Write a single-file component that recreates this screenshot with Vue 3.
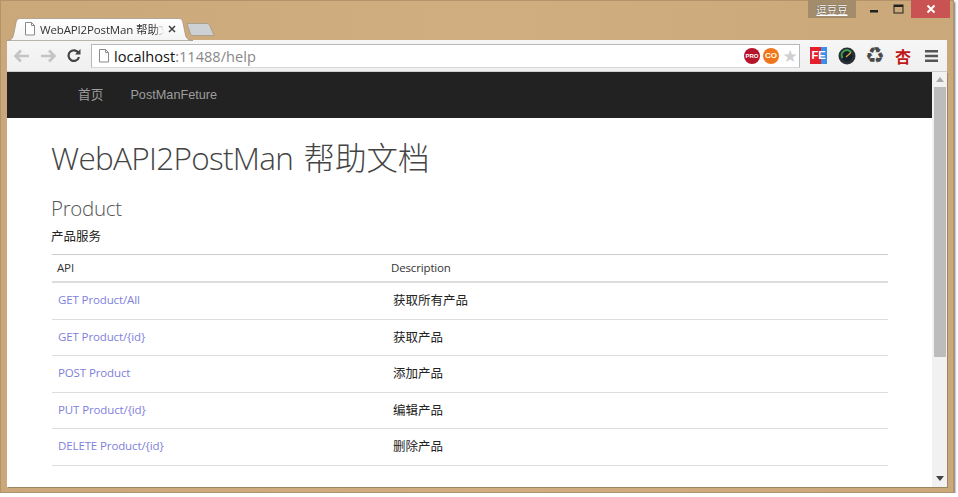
<script setup>
const rows = [
  { api: 'GET Product/All', desc: '获取所有产品' },
  { api: 'GET Product/{id}', desc: '获取产品' },
  { api: 'POST Product', desc: '添加产品' },
  { api: 'PUT Product/{id}', desc: '编辑产品' },
  { api: 'DELETE Product/{id}', desc: '删除产品' },
]
</script>

<template>
  <div class="window">
    <header class="titlebar">
      <div class="tab">
        <svg class="tab-shape" width="186" height="23" viewBox="0 0 186 23">
          <path d="M0 22.5 C5 22 6 20 7 15 L9 5 C10 1 11 .5 15 .5 L170 .5 C174 .5 175 1 176 5 L178 15 C179 20 180 22 186 22.5 Z" fill="url(#tabfill)" stroke="#8f8878" stroke-width=".6" />
          <defs>
            <linearGradient id="tabfill" x1="0" y1="0" x2="0" y2="1">
              <stop offset="0" stop-color="#ffffff" />
              <stop offset="1" stop-color="#f4f4f4" />
            </linearGradient>
          </defs>
        </svg>
        <svg class="page-icon" width="12" height="14" viewBox="0 0 12 14">
          <path d="M1.5 .5 H7.5 L10.5 3.5 V13 H1.5 Z M7.5 .5 V3.5 H10.5" fill="#fff" stroke="#8a8a8a" />
        </svg>
        <span class="tab-title">WebAPI2PostMan 帮助文</span>
        <svg class="tab-close" width="8" height="8" viewBox="0 0 8 8">
          <path d="M1 1 L7 7 M7 1 L1 7" stroke="#444" stroke-width="1.6" />
        </svg>
      </div>
      <svg class="newtab" width="30" height="13" viewBox="0 0 30 13">
        <path d="M1 .5 H20 C22 .5 23 1 24 3 L28 12.5 H7 C5.500 12.500 5 12 4.500 11 Z" fill="#cdd1d4" stroke="#9a9384" stroke-width=".7" />
      </svg>
      <div class="user">逗豆豆</div>
      <div class="controls">
        <svg width="10" height="10" viewBox="0 0 10 10"><rect x="1" y="6" width="8" height="2.500" fill="#222" /></svg>
        <svg class="max" width="11" height="10" viewBox="0 0 11 10"><rect x="1" y="1" width="9" height="8" fill="none" stroke="#222" stroke-width="1" /><rect x="1" y="1" width="9" height="2" fill="#222" /></svg>
        <div class="close">
          <svg width="10" height="10" viewBox="0 0 10 10"><path d="M1.500 1.500 L8.500 8.500 M8.500 1.500 L1.500 8.500" stroke="#fff" stroke-width="2" /></svg>
        </div>
      </div>
    </header>

    <div class="toolbar">
      <svg class="nav" width="18" height="14" viewBox="0 0 18 14"><path d="M16 7 H3 M8 1.500 L2.500 7 L8 12.500" fill="none" stroke="#c4c4c4" stroke-width="2.600" /></svg>
      <svg class="nav fwd" width="18" height="14" viewBox="0 0 18 14"><path d="M2 7 H15 M10 1.500 L15.500 7 L10 12.500" fill="none" stroke="#c4c4c4" stroke-width="2.600" /></svg>
      <svg class="reload" width="14" height="14" viewBox="0 0 14 14"><path d="M11.500 4 A5.300 5.300 0 1 0 12 8" fill="none" stroke="#444" stroke-width="2.200" /><path d="M8 5.500 H13.500 V0 Z" fill="#444" /></svg>
      <div class="omnibox">
        <svg width="12" height="14" viewBox="0 0 12 14">
          <path d="M1.500 .5 H7.500 L10.500 3.500 V13 H1.500 Z M7.500 .5 V3.500 H10.500" fill="#fff" stroke="#8a8a8a" />
        </svg>
        <span class="url"><b>localhost</b>:11488/help</span>
        <span class="badge pro">PRO</span>
        <span class="badge co">CO</span>
        <span class="star">★</span>
      </div>
      <div class="exts">
        <span class="fe"><i>F</i><i>E</i></span>
        <svg width="20" height="20" viewBox="0 0 20 20">
          <circle cx="10" cy="10" r="8.500" fill="#2b3036" />
          <circle cx="10" cy="10" r="5.500" fill="#13202c" />
          <path d="M5.500 12 A5 5 0 0 1 14 6.500" fill="none" stroke="#3fa34d" stroke-width="2" />
          <path d="M14 6.500 L9 11" stroke="#e0a030" stroke-width="1.400" />
        </svg>
        <span class="recycle">♻</span>
        <span class="xing">杏</span>
        <svg width="13" height="12" viewBox="0 0 13 12"><path d="M0 0 H13 V2.500 H0 Z M0 4.700 H13 V7.200 H0 Z M0 9.400 H13 V11.900 H0 Z" fill="#555" /></svg>
      </div>
    </div>

    <div class="viewport">
      <main class="page">
        <nav class="navbar">
          <a>首页</a>
          <a>PostManFeture</a>
        </nav>
        <div class="content">
          <h1><span class="latin">WebAPI2PostMan</span> 帮助文档</h1>
          <h2>Product</h2>
          <p>产品服务</p>
          <table>
            <thead>
              <tr>
                <th class="c1">API</th>
                <th class="c2">Description</th>
              </tr>
            </thead>
            <tbody>
              <tr v-for="r in rows" :key="r.api">
                <td class="link">{{ r.api }}</td>
                <td class="desc">{{ r.desc }}</td>
              </tr>
            </tbody>
          </table>
        </div>
      </main>
      <aside class="scrollbar">
        <span class="arrow up"></span>
        <div class="thumb"></div>
        <span class="arrow down"></span>
      </aside>
    </div>
  </div>
</template>

<style>
html, body { margin: 0; padding: 0; overflow: hidden; background: #fff; }
</style>

<style scoped>
.window {
  width: 954px;
  height: 493px;
  box-sizing: border-box;
  display: flex;
  flex-direction: column;
  background: linear-gradient(to right, #caa87a 0, #d1ae80 50%, #caa87a 100%);
  padding: 0 7px 6px 7px;
  font-family: "Open Sans", "Noto Sans CJK SC", sans-serif;
  box-shadow: inset 0 0 0 1px #b3946a, 1px 2px 2px #666;
}
.titlebar {
  height: 40px;
  flex: none;
  display: flex;
  align-items: flex-start;
}
.tab {
  position: relative;
  width: 173px;
  height: 22px;
  margin: 18px 0 0;
  padding-left: 17px;
  display: flex;
  align-items: center;
  box-sizing: border-box;
  font-size: 11.500px;
  color: #333;
}
.tab-shape { position: absolute; left: 0; top: 0; }
.page-icon, .tab-title, .tab-close { position: relative; }
.tab-title {
  width: 124px;
  margin-left: 4px;
  white-space: nowrap;
  overflow: hidden;
  letter-spacing: -.15px;
  -webkit-mask-image: linear-gradient(to right, #000 92%, transparent);
  mask-image: linear-gradient(to right, #000 92%, transparent);
}
.tab-close { margin-left: 4px; }
.newtab { margin: 23px 0 0 6px; flex: none; }
.user {
  margin-left: auto;
  width: 48px;
  height: 18px;
  background: #a28c6b;
  color: #fff;
  font-size: 10.500px;
  line-height: 20px;
  text-align: center;
  text-decoration: underline;
  text-shadow: 0 0 1px #333;
  margin-right: 13px;
}
.controls {
  display: flex;
  align-items: center;
  height: 18px;
  margin-right: -3px;
}
.controls .max { margin-left: 14px; margin-right: 7px; }
.close {
  width: 39px;
  height: 18px;
  background: #c95252;
  display: flex;
  align-items: center;
  justify-content: center;
}
.toolbar {
  height: 32px;
  flex: none;
  display: flex;
  align-items: center;
  background: linear-gradient(#f6f6f6, #f0f0f0);
  padding-left: 6px;
  box-sizing: border-box;
  border-bottom: 1px solid #cfcfcf;
}
.fwd { margin-left: 8px; }
.reload { margin-left: 10px; }
.omnibox {
  margin-left: 10px;
  width: 709px;
  height: 24px;
  box-sizing: border-box;
  display: flex;
  align-items: center;
  background: #fff;
  border: 1px solid #b8b8b8;
  border-bottom-color: #d8d8d8;
  padding-left: 6px;
}
.url {
  margin-left: 4px;
  font-size: 14.600px;
  color: #888;
  flex: 1;
}
.url b { font-weight: 400; color: #111; }
.badge {
  width: 16px;
  height: 16px;
  border-radius: 50%;
  color: #fff;
  font-size: 6px;
  font-weight: 700;
  display: flex;
  align-items: center;
  justify-content: center;
  font-family: "Liberation Sans", sans-serif;
}
.pro { background: #b5142b; }
.co { background: #f0761e; margin-left: 3px; font-size: 8px; color: #ffe; }
.star { color: #cfcfcf; font-size: 17px; line-height: 16px; width: 20px; text-align: center; margin-right: -1px; margin-left: 1px; font-family: "DejaVu Sans", sans-serif; }
.exts {
  display: flex;
  align-items: center;
  margin-left: 10px;
}
.fe {
  width: 17px;
  height: 17px;
  display: flex;
  background: linear-gradient(to right, #e3202c 0 62%, #3b8fe8 62% 100%);
  color: #fff;
  font: 700 11px "Liberation Sans", sans-serif;
  line-height: 17px;
  align-items: center;
  justify-content: center;
  margin-right: 10px;
}
.fe i { font-style: normal; }
.recycle {
  width: 20px;
  margin-left: 8px;
  font: 22px/20px "DejaVu Sans", sans-serif;
  color: #4a4a4a;
  text-align: center;
}
.xing {
  width: 18px;
  margin-left: 9px;
  margin-right: 13px;
  font: 700 16px/20px "Noto Sans CJK SC", sans-serif;
  color: #c01818;
  text-align: center;
}
.viewport {
  flex: 1;
  display: flex;
  min-height: 0;
  background: #fff;
  box-shadow: 1px 1px 0 #9b8763;
}
.page {
  flex: 1;
  min-width: 0;
  overflow: hidden;
}
.navbar {
  height: 46px;
  background: #222;
  display: flex;
  align-items: center;
  padding-left: 71px;
  gap: 27px;
  font: 12.700px/16px "Liberation Sans", "Noto Sans CJK SC", sans-serif;
  color: #9d9d9d;
}
.content {
  padding: 0 44px;
}
h1 {
  margin: 20px 0 0;
  font-size: 31.500px;
  line-height: 40px;
  font-weight: 300;
  color: #444;
  white-space: nowrap;
  word-spacing: 2px;
}
.latin { letter-spacing: -.7px; }
h2 {
  margin: 16px 0 0;
  font-size: 20.500px;
  line-height: 28px;
  font-weight: 300;
  color: #555;
  letter-spacing: -.3px;
}
p {
  margin: 6px 0 0;
  font-size: 12.500px;
  line-height: 18px;
  color: #222;
}
table {
  width: 836px;
  margin: 8px 0 0 1px;
  border-collapse: collapse;
  table-layout: fixed;
  font-size: 11.500px;
  border-top: 1px solid #ccc;
}
th {
  font-weight: 400;
  text-align: left;
  height: 27px;
  padding: 0;
  box-sizing: border-box;
  color: #333;
  border-bottom: 2px solid #ddd;
  letter-spacing: -.15px;
}
th.c1 { width: 339px; padding-left: 5px; }
td {
  height: 33px;
  padding: 0 0 2px;
  border-bottom: 1px solid #ddd;
}
tbody tr:nth-child(odd) td { height: 34px; }
.link { color: #7f7fdc; padding-left: 6px; letter-spacing: -.12px; }
.desc { color: #222; padding-left: 2px; font-size: 12.500px; }
.scrollbar {
  width: 15px;
  flex: none;
  background: #f1f1f1;
  display: flex;
  flex-direction: column;
  align-items: center;
  padding-top: 5px;
  box-sizing: border-box;
}
.arrow { width: 0; height: 0; border-left: 4px solid transparent; border-right: 4px solid transparent; }
.up { border-bottom: 5px solid #a8a8a8; }
.down { border-top: 5px solid #444; margin-top: auto; margin-bottom: 6px; }
.thumb {
  width: 12px;
  height: 270px;
  margin-top: 5px;
  background: #bcbcbc;
}
</style>
